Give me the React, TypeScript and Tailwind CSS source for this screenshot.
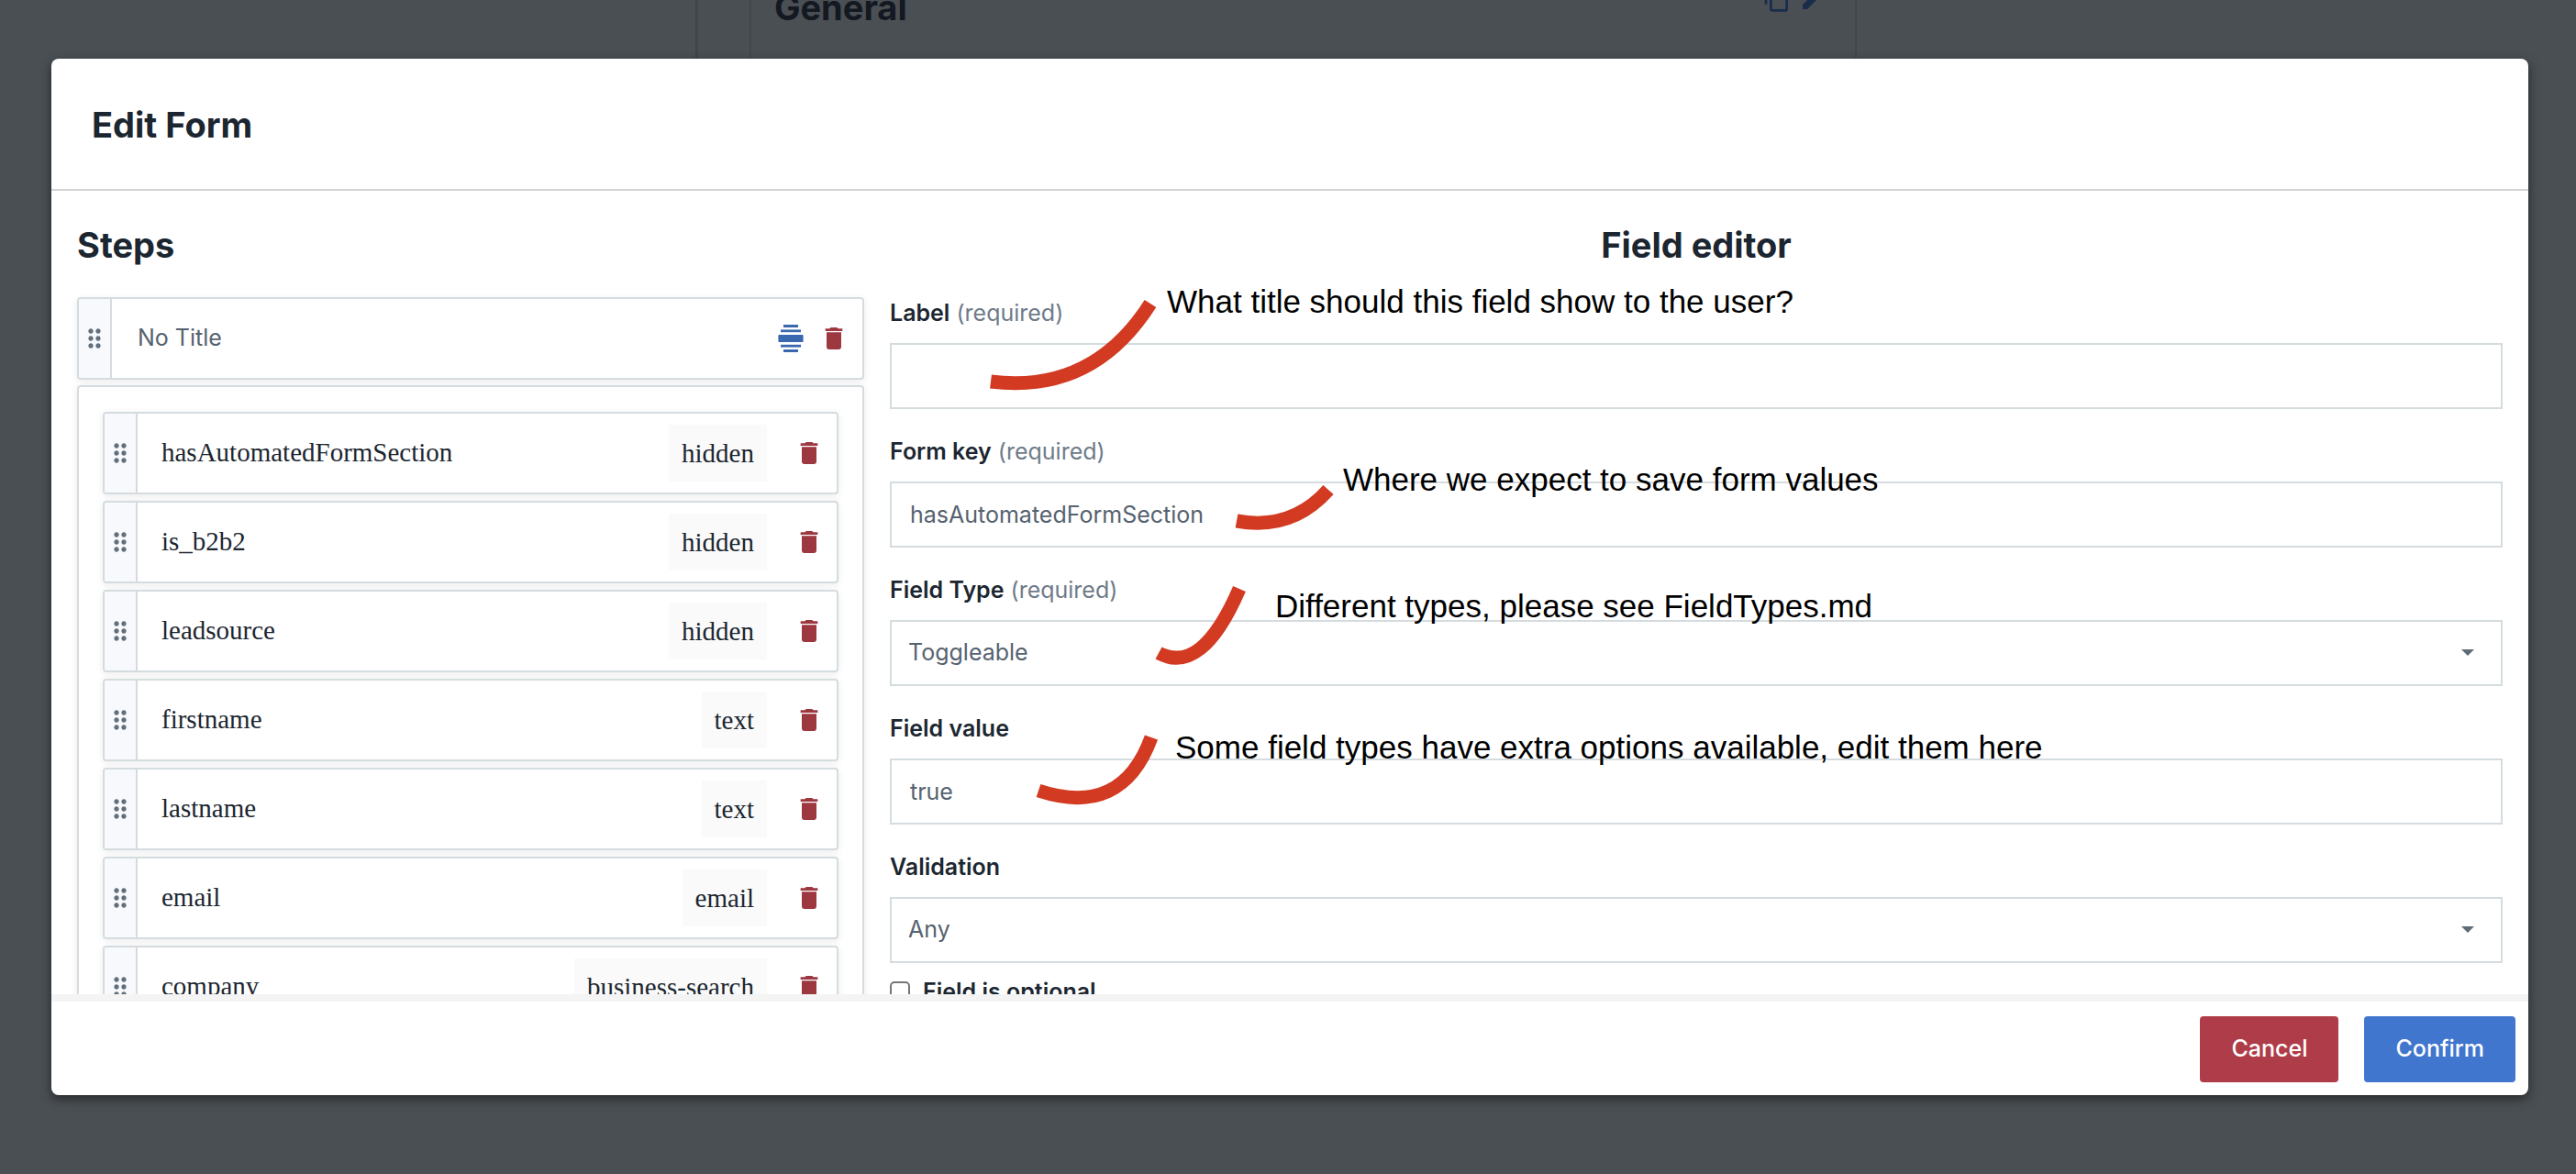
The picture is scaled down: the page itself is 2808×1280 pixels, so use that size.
import type { ReactNode } from "react";
import { MdContentCopy, MdDelete, MdDragIndicator, MdEdit } from "react-icons/md";

const fields = [
  { name: "hasAutomatedFormSection", type: "hidden" },
  { name: "is_b2b2", type: "hidden" },
  { name: "leadsource", type: "hidden" },
  { name: "firstname", type: "text" },
  { name: "lastname", type: "text" },
  { name: "email", type: "email" },
  { name: "company", type: "business-search" },
];

function DragHandle() {
  return (
    <button
      type="button"
      aria-label="Drag to reorder"
      className="flex shrink-0 items-center justify-center border-r-2 border-[#d5dcdf] bg-[#f7f9fc] px-px text-[#636f7b]"
    >
      <MdDragIndicator size={32} />
    </button>
  );
}

function DeleteButton({ label }: { label: string }) {
  return (
    <button type="button" aria-label={label} className="shrink-0 text-[#9d3740]">
      <MdDelete size={32} />
    </button>
  );
}

function SectionIcon() {
  return (
    <svg width="32" height="32" viewBox="0 0 32 32" fill="currentColor" aria-hidden="true">
      <rect x="8" y="1" width="16" height="3" />
      <rect x="5" y="6.4" width="22" height="2.8" />
      <rect x="2.4" y="12" width="27.2" height="8" rx="1" />
      <rect x="5" y="22.8" width="22" height="2.8" />
      <rect x="8" y="28" width="16" height="3" />
    </svg>
  );
}

function FieldRow({ name, type }: { name: string; type: string }) {
  return (
    <li className="flex h-[90px] overflow-hidden rounded-[4px] border-2 border-[#d5dcdf] bg-white shadow-[0_2px_8px_rgba(0,0,0,0.08)]">
      <DragHandle />
      <div className="flex flex-1 items-center pr-[14px] pl-[26px] font-['Liberation_Serif',serif] text-[29px] text-[#1c2630]">
        <span className="flex-1">{name}</span>
        <span className="mr-[30px] bg-[#fafafa] px-[14px] leading-[62px]">{type}</span>
        <DeleteButton label={`Delete ${name}`} />
      </div>
    </li>
  );
}

function Field({
  id,
  label,
  required,
  children,
  note,
}: {
  id: string;
  label: string;
  required?: boolean;
  children: ReactNode;
  note?: ReactNode;
}) {
  return (
    <div className="relative mb-8">
      <label htmlFor={id} className="mb-[19px] block leading-7 font-semibold text-[#1c2630]">
        {label}
        {required && <span className="font-normal text-[#6e7b89]"> (required)</span>}
      </label>
      {children}
      {note}
    </div>
  );
}

function Note({ path, className, children }: { path: string; className: string; children: string }) {
  return (
    <div className="pointer-events-none">
      <svg className="absolute top-0 left-0 overflow-visible" width="500" height="120" aria-hidden="true">
        <path d={path} fill="none" stroke="#d23a22" strokeWidth="15" />
      </svg>
      <p
        className={`absolute font-['Liberation_Sans',sans-serif] text-[35px] leading-10 whitespace-nowrap text-black ${className}`}
      >
        {children}
      </p>
    </div>
  );
}

const control = "block h-[72px] w-full border-2 border-[#d5dcdf] bg-white text-[#56626f]";

function Select({ id, options }: { id: string; options: string[] }) {
  return (
    <div className="relative">
      <select id={id} className={`${control} appearance-none px-[18px]`}>
        {options.map((o) => (
          <option key={o}>{o}</option>
        ))}
      </select>
      <svg
        className="pointer-events-none absolute top-8 right-[31px] text-[#5f6b77]"
        width="14"
        height="7"
        viewBox="0 0 14 7"
        fill="currentColor"
        aria-hidden="true"
      >
        <path d="M0 0h14L7 7z" />
      </svg>
    </div>
  );
}

export default function App() {
  return (
    <div className="relative flex h-screen overflow-hidden bg-[#4a4f53] pt-16 pr-[52px] pb-[86px] pl-14 font-['Inter',sans-serif] text-[25px]">
      <div className="absolute inset-x-0 top-0 flex h-24" aria-hidden="true">
        <div className="w-[27.1%] border-r-3 border-[#41464a]" />
        <div className="ml-14 flex w-[43%] items-start justify-between border-x-2 border-[#43484c] pr-[29px] pl-[25px]">
          <h2 className="-mt-4 text-[38px] leading-12 font-bold text-[#131821]">General</h2>
          <div className="-mt-[18px] flex gap-2 text-[#192c4b]">
            <MdContentCopy size={32} />
            <MdEdit size={32} />
          </div>
        </div>
      </div>

      <div
        role="dialog"
        aria-labelledby="dialog-title"
        className="relative flex min-w-0 flex-1 flex-col overflow-hidden rounded-lg bg-white shadow-[0_4px_12px_rgba(0,0,0,0.5)]"
      >
        <header className="border-b-2 border-[#d3d3d3] px-11 pt-12 pb-[46px]">
          <h1 id="dialog-title" className="text-[38px] leading-12 font-bold text-[#1c2630]">
            Edit Form
          </h1>
        </header>

        <main className="grid min-h-0 flex-1 grid-cols-[143fr_293fr] gap-7 overflow-y-auto px-7 pt-[35px] [scrollbar-width:none]">
          <section>
            <h2 className="mb-[33px] text-[38px] leading-12 font-bold text-[#1c2630]">Steps</h2>
            <div className="mb-1.5 flex h-[90px] overflow-hidden rounded-[4px] border-2 border-[#d5dcdf] bg-white shadow-[0_2px_8px_rgba(0,0,0,0.08)]">
              <DragHandle />
              <div className="flex flex-1 items-center gap-[15px] pr-[15px] pl-7 text-[#56626f]">
                <span className="flex-1">No Title</span>
                <button type="button" aria-label="Add section" className="text-[#3a68ae]">
                  <SectionIcon />
                </button>
                <DeleteButton label="Delete step" />
              </div>
            </div>
            <ul className="flex flex-col gap-[7px] rounded-[4px] border-2 border-[#d5dcdf] px-[26px] pt-[27px] pb-[26px] shadow-[0_2px_8px_rgba(0,0,0,0.08)]">
              {fields.map((f) => (
                <FieldRow key={f.name} {...f} />
              ))}
            </ul>
          </section>

          <section>
            <h2 className="mb-9 text-center text-[38px] leading-12 font-bold text-[#1c2630]">Field editor</h2>
            <Field
              id="label"
              label="Label"
              required
              note={
                <Note path="M110 89Q221 103 284 4" className="top-[-18px] left-[302px]">
                  What title should this field show to the user?
                </Note>
              }
            >
              <input id="label" type="text" className={`${control} px-5`} />
            </Field>
            <Field
              id="form-key"
              label="Form key"
              required
              note={
                <Note path="M378 90Q438 101 478 56" className="top-[25px] left-[494px]">
                  Where we expect to save form values
                </Note>
              }
            >
              <input id="form-key" type="text" defaultValue="hasAutomatedFormSection" className={`${control} px-5`} />
            </Field>
            <Field
              id="field-type"
              label="Field Type"
              required
              note={
                <Note path="M293 83Q340 108 381 13" className="top-[12px] left-[420px]">
                  Different types, please see FieldTypes.md
                </Note>
              }
            >
              <Select id="field-type" options={["Toggleable", "Text", "Hidden"]} />
            </Field>
            <Field
              id="field-value"
              label="Field value"
              note={
                <Note path="M162 82Q253 112 285 24" className="top-[15px] left-[311px]">
                  Some field types have extra options available, edit them here
                </Note>
              }
            >
              <input id="field-value" type="text" defaultValue="true" className={`${control} px-5`} />
            </Field>
            <div className="-mb-[15px]">
              <Field id="validation" label="Validation">
                <Select id="validation" options={["Any", "Email", "Number"]} />
              </Field>
            </div>
            <label className="flex items-center gap-[14px] leading-7 font-semibold text-[#1c2630]">
              <input
                type="checkbox"
                className="size-[22px] appearance-none rounded-[5px] border-2 border-[#767676] bg-white checked:bg-[#4176cf]"
              />
              Field is optional
            </label>
          </section>
        </main>

        <footer className="flex justify-end gap-7 border-t-8 border-[#f4f4f4] px-[14px] pt-4 pb-[14px] font-medium text-white">
          <button type="button" className="h-[72px] rounded-[4px] bg-[#af3d49] px-[34px]">
            Cancel
          </button>
          <button type="button" className="h-[72px] rounded-[4px] bg-[#4176cf] px-[34px]">
            Confirm
          </button>
        </footer>
      </div>
    </div>
  );
}
